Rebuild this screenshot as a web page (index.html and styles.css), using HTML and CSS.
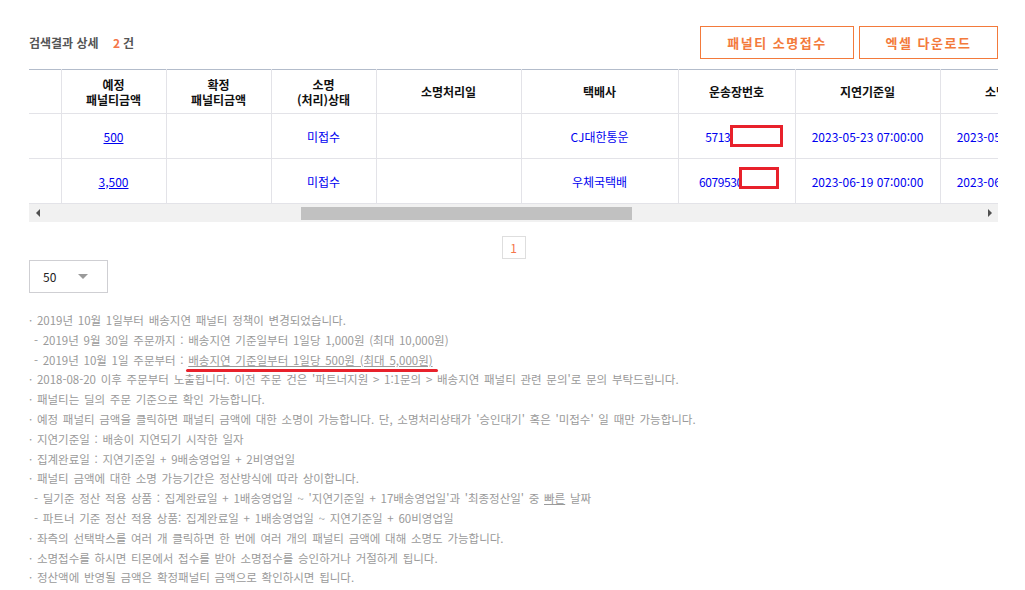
FILE: index.html
```html
<!DOCTYPE html>
<html lang="ko">

<head>
    <meta charset="UTF-8">
    <title>배송지연 패널티</title>
    <link rel="stylesheet" href="styles.css">
</head>

<body>
    <div class="layout">
        <div class="top">
            <h2 class="title">검색결과 상세 <em>2</em>건</h2>
            <div class="btns">
                <button class="btn btn-wide">패널티 소명접수</button>
                <button class="btn">엑셀 다운로드</button>
            </div>
        </div>

        <div class="grid-wrap">
            <table class="grid">
                <colgroup>
                    <col class="c-chk">
                    <col class="c-105">
                    <col class="c-105">
                    <col class="c-105">
                    <col class="c-145">
                    <col class="c-157">
                    <col class="c-117">
                    <col class="c-145">
                    <col class="c-145">
                </colgroup>
                <thead>
                    <tr>
                        <th></th>
                        <th>예정<br>패널티금액</th>
                        <th>확정<br>패널티금액</th>
                        <th>소명<br>(처리)상태</th>
                        <th>소명처리일</th>
                        <th>택배사</th>
                        <th>운송장번호</th>
                        <th>지연기준일</th>
                        <th>소명마감일</th>
                    </tr>
                </thead>
                <tbody>
                    <tr>
                        <td></td>
                        <td><a href="#">500</a></td>
                        <td></td>
                        <td>미접수</td>
                        <td></td>
                        <td>CJ대한통운</td>
                        <td class="invoice">5713800000<span class="mask mask-1"></span></td>
                        <td>2023-05-23 07:00:00</td>
                        <td>2023-05-30 07:00:00</td>
                    </tr>
                    <tr>
                        <td></td>
                        <td><a href="#">3,500</a></td>
                        <td></td>
                        <td>미접수</td>
                        <td></td>
                        <td>우체국택배</td>
                        <td class="invoice">607953000000<span class="mask mask-2"></span></td>
                        <td>2023-06-19 07:00:00</td>
                        <td>2023-06-26 07:00:00</td>
                    </tr>
                </tbody>
            </table>
        </div>
        <div class="scrollbar">
            <span class="arr arr-l"></span>
            <div class="track"><span class="thumb"></span></div>
            <span class="arr arr-r"></span>
        </div>

        <div class="paging">
            <a href="#" class="on">1</a>
        </div>

        <div class="page-size">
            <span>50</span>
            <i class="caret"></i>
        </div>

        <ul class="notes">
            <li>· 2019년 10월 1일부터 배송지연 패널티 정책이 변경되었습니다.</li>
            <li class="sub">- 2019년 9월 30일 주문까지 : 배송지연 기준일부터 1일당 1,000원 (최대 10,000원)</li>
            <li class="sub">- 2019년 10월 1일 주문부터 : <span class="mark">배송지연 기준일부터 1일당 500원 (최대 5,000원)</span></li>
            <li>· 2018-08-20 이후 주문부터 노출됩니다. 이전 주문 건은 '파트너지원 &gt; 1:1문의 &gt; 배송지연 패널티 관련 문의'로 문의 부탁드립니다.</li>
            <li>· 패널티는 딜의 주문 기준으로 확인 가능합니다.</li>
            <li>· 예정 패널티 금액을 클릭하면 패널티 금액에 대한 소명이 가능합니다. 단, 소명처리상태가 '승인대기' 혹은 '미접수' 일 때만 가능합니다.</li>
            <li>· 지연기준일 : 배송이 지연되기 시작한 일자</li>
            <li>· 집계완료일 : 지연기준일 + 9배송영업일 + 2비영업일</li>
            <li>· 패널티 금액에 대한 소명 가능기간은 정산방식에 따라 상이합니다.</li>
            <li class="sub">- 딜기준 정산 적용 상품 : 집계완료일 + 1배송영업일 ~ '지연기준일 + 17배송영업일'과 '최종정산일' 중 <u>빠른</u> 날짜</li>
            <li class="sub">- 파트너 기준 정산 적용 상품: 집계완료일 + 1배송영업일 ~ 지연기준일 + 60비영업일</li>
            <li>· 좌측의 선택박스를 여러 개 클릭하면 한 번에 여러 개의 패널티 금액에 대해 소명도 가능합니다.</li>
            <li>· 소명접수를 하시면 티몬에서 접수를 받아 소명접수를 승인하거나 거절하게 됩니다.</li>
            <li>· 정산액에 반영될 금액은 확정패널티 금액으로 확인하시면 됩니다.</li>
            <li>· 소명 결과는 소명처리일 이후 정산 내역에서 확인하실 수 있습니다.</li>
        </ul>
    </div>
</body>

</html>
```

FILE: styles.css
```css
ul {
    padding: 0;
    margin: 0;
    list-style: none;
}

h2 {
    margin: 0;
}

button {
    border: 0;
    outline: none;
    background: none;
    font-family: inherit;
}

body {
    margin: 0;
    font-family: "Noto Sans CJK KR", "Liberation Sans", sans-serif;
    color: #333;
}

.layout {
    width: 969px;
    padding: 26px 0 0 29px;
}

/* 상단 타이틀 + 버튼 */
.top {
    display: flex;
    align-items: center;
    justify-content: space-between;
    height: 33px;
}

.title {
    font-size: 12px;
    font-weight: 700;
    color: #555;
}

.title em {
    font-style: normal;
    color: #f5764a;
    margin: 0 3px 0 11px;
}

.btns {
    display: flex;
    gap: 5px;
}

.btn {
    width: 139px;
    height: 33px;
    border: 1px solid #f37a3b;
    color: #f37a3b;
    font-size: 13px;
    font-weight: 700;
    letter-spacing: 1.5px;
    cursor: pointer;
}

.btn-wide {
    width: 154px;
}

/* 그리드 */
.grid-wrap {
    margin-top: 10px;
    overflow: hidden;
}

.grid {
    width: 1056px;
    table-layout: fixed;
    border-collapse: collapse;
    border-top: 1px solid #b3bccb;
}

.c-chk { width: 32px; }
.c-105 { width: 105px; }
.c-117 { width: 117px; }
.c-145 { width: 145px; }
.c-157 { width: 157px; }

.grid th,
.grid td {
    height: 44px;
    padding: 0;
    text-align: center;
    border: 1px solid #e3e3e8;
    border-top: 0;
}

.grid th {
    height: 43px;
}

.grid tr> :first-child {
    border-left: 0;
}

.grid th {
    font-size: 12px;
    font-weight: 700;
    color: #111;
    line-height: 15px;
}

.grid td {
    font-size: 12px;
    color: #0000f0;
}

.grid td a {
    color: #0000f0;
    text-decoration: underline;
}

.grid .invoice {
    position: relative;
    overflow: hidden;
    white-space: nowrap;
    letter-spacing: -0.4px;
}

/* 가림 처리 박스 */
.mask {
    position: absolute;
    background: #fff;
    border: 3px solid #e8212b;
    box-sizing: border-box;
}

.mask-1 {
    left: 51px;
    top: 11px;
    width: 53px;
    height: 22px;
}

.mask-2 {
    left: 60px;
    top: 8px;
    width: 40px;
    height: 22px;
}

/* 가로 스크롤바 */
.scrollbar {
    display: flex;
    align-items: center;
    height: 18px;
    background-color: #f1f1f1;
}

.arr {
    width: 17px;
    display: flex;
    justify-content: center;
}

.arr::before {
    content: "";
    border-top: 4px solid transparent;
    border-bottom: 4px solid transparent;
}

.arr-l::before {
    border-right: 4px solid #505050;
}

.arr-r::before {
    border-left: 4px solid #505050;
}

.track {
    flex: 1;
    display: flex;
}

.thumb {
    margin-left: 255px;
    width: 331px;
    height: 13px;
    background-color: #c1c1c1;
}

/* 페이징 */
.paging {
    display: flex;
    justify-content: center;
    margin-top: 14px;
}

.paging a {
    width: 24px;
    height: 23px;
    box-sizing: border-box;
    border: 1px solid #dedede;
    display: flex;
    align-items: center;
    justify-content: center;
    font-size: 12px;
    color: #f5764a;
    text-decoration: none;
}

.page-size {
    width: 79px;
    height: 33px;
    margin-top: 1px;
    box-sizing: border-box;
    border: 1px solid #cfcfd3;
    display: flex;
    align-items: center;
    padding-left: 13px;
    font-size: 12px;
    color: #222;
}

.caret {
    margin: 0 19px 0 auto;
    border-top: 5px solid #9a9a9a;
    border-left: 5px solid transparent;
    border-right: 5px solid transparent;
}

/* 안내 문구 */
.notes {
    margin-top: 18px;
    font-size: 11.5px;
    line-height: 19.8px;
    color: #9a9a9a;
    word-spacing: 1.5px;
    white-space: nowrap;
}

.notes .sub {
    padding-left: 5px;
}

.notes u,
.mark {
    text-decoration: underline;
}

.mark {
    position: relative;
}

.mark::after {
    content: "";
    position: absolute;
    left: -2px;
    right: -5px;
    bottom: -4px;
    height: 3px;
    border-radius: 2px;
    background-color: #e8212b;
}
```
